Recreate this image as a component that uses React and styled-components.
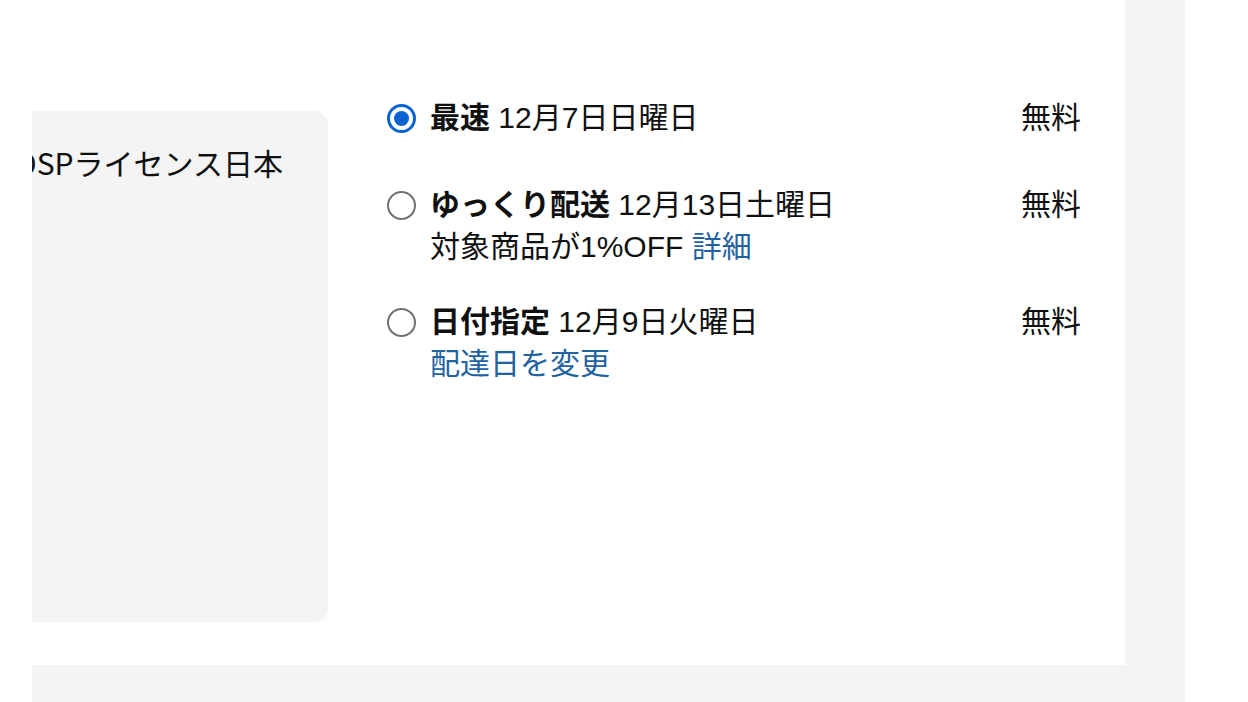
import React from "react";
import styled, { createGlobalStyle } from "styled-components";

const Global = createGlobalStyle`
  html, body { margin: 0; padding: 0; background: #ffffff; }
  body {
    font-family: "Liberation Sans", "Noto Sans CJK JP", sans-serif;
    color: #0f1111;
  }
`;

const Page = styled.div`
  margin-left: 32px;
  width: 1153px;
  height: 702px;
  box-sizing: border-box;
  background: #f4f4f4;
  padding: 0 60px 37px 0;
  display: flex;
`;

const Card = styled.div`
  flex: 1;
  background: #ffffff;
  display: flex;
  align-items: flex-start;
  overflow: hidden;
`;

const InfoPanel = styled.div`
  flex: 0 0 296px;
  height: 511px;
  margin-top: 111px;
  background: #f4f4f4;
  border-radius: 0 14px 14px 0;
  overflow: hidden;
  padding-top: 30px;
  box-sizing: border-box;
`;

const InfoText = styled.div`
  margin-left: -16px;
  white-space: nowrap;
  font-family: "Noto Sans CJK JP", sans-serif;
  font-size: 30px;
  line-height: 42px;
`;

const Options = styled.div`
  flex: 1;
  padding: 97px 44px 0 59px;
  display: flex;
  flex-direction: column;
`;

const OptionRow = styled.label`
  display: flex;
  align-items: flex-start;
  gap: 14px;
  margin-bottom: ${(p) => p.$mb}px;
  font-size: 30px;
  line-height: 42px;
  cursor: pointer;
`;

const Radio = styled.span`
  flex: 0 0 auto;
  width: 29px;
  height: 29px;
  margin-top: 7px;
  box-sizing: border-box;
  border-radius: 50%;
  border: ${(p) => (p.$checked ? "3px solid #0b63d1" : "2px solid #6f7373")};
  display: flex;
  align-items: center;
  justify-content: center;
  &::after {
    content: "";
    width: 15px;
    height: 15px;
    border-radius: 50%;
    background: ${(p) => (p.$checked ? "#0b63d1" : "transparent")};
  }
`;

const Body = styled.div`
  flex: 1;
  display: flex;
  flex-direction: column;
`;

const Line = styled.div`
  white-space: nowrap;
`;

const Strong = styled.b`
  font-weight: 700;
`;

const Link = styled.a`
  color: #2162a1;
  text-decoration: none;
`;

const Price = styled.span`
  flex: 0 0 auto;
`;

const options = [
  {
    label: "最速",
    date: "12月7日日曜日",
    checked: true,
    mb: 45,
  },
  {
    label: "ゆっくり配送",
    date: "12月13日土曜日",
    extra: (
      <Line>
        対象商品が1%OFF <Link href="#">詳細</Link>
      </Line>
    ),
    mb: 33,
  },
  {
    label: "日付指定",
    date: "12月9日火曜日",
    extra: (
      <Line>
        <Link href="#">配達日を変更</Link>
      </Line>
    ),
    mb: 0,
  },
];

export default function App() {
  return (
    <>
      <Global />
      <Page>
        <Card>
          <InfoPanel>
            <InfoText>DSPライセンス日本</InfoText>
          </InfoPanel>
          <Options>
            {options.map((o) => (
              <OptionRow key={o.label} $mb={o.mb}>
                <Radio $checked={o.checked} />
                <Body>
                  <Line>
                    <Strong>{o.label}</Strong> {o.date}
                  </Line>
                  {o.extra}
                </Body>
                <Price>無料</Price>
              </OptionRow>
            ))}
          </Options>
        </Card>
      </Page>
    </>
  );
}
